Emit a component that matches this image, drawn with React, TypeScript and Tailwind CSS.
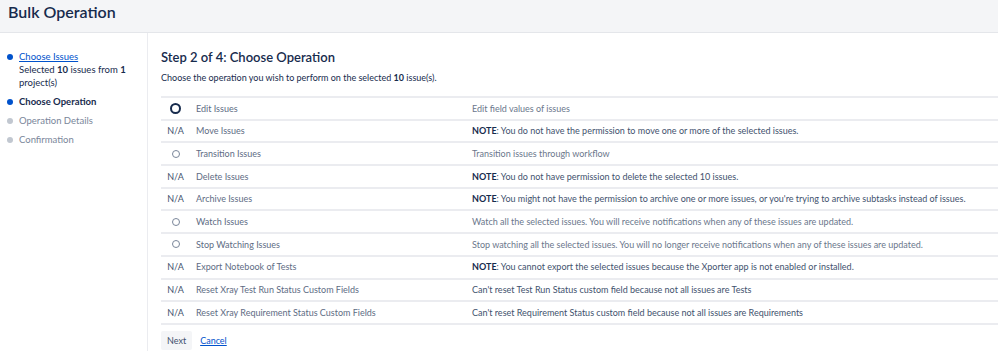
import React from 'react';

type Op = {
  name: string;
  available: boolean;
  desc: React.ReactNode;
  note?: boolean;
};

const ops: Op[] = [
  { name: 'Edit Issues', available: true, desc: 'Edit field values of issues' },
  { name: 'Move Issues', available: false, note: true, desc: 'You do not have the permission to move one or more of the selected issues.' },
  { name: 'Transition Issues', available: true, desc: 'Transition issues through workflow' },
  { name: 'Delete Issues', available: false, note: true, desc: 'You do not have permission to delete the selected 10 issues.' },
  { name: 'Archive Issues', available: false, note: true, desc: "You might not have the permission to archive one or more issues, or you're trying to archive subtasks instead of issues." },
  { name: 'Watch Issues', available: true, desc: 'Watch all the selected issues. You will receive notifications when any of these issues are updated.' },
  { name: 'Stop Watching Issues', available: true, desc: 'Stop watching all the selected issues. You will no longer receive notifications when any of these issues are updated.' },
  { name: 'Export Notebook of Tests', available: false, note: true, desc: 'You cannot export the selected issues because the Xporter app is not enabled or installed.' },
  { name: 'Reset Xray Test Run Status Custom Fields', available: false, desc: "Can't reset Test Run Status custom field because not all issues are Tests" },
  { name: 'Reset Xray Requirement Status Custom Fields', available: false, desc: "Can't reset Requirement Status custom field because not all issues are Requirements" },
];

export default function App() {
  return (
    <div className="w-[998px] h-[351px] overflow-hidden bg-white text-[#172b4d] font-['Lato','Open_Sans',sans-serif]">
      {/* header */}
      <header className="h-[33px] bg-[#f4f5f7] border-b border-[#e4e6ea] flex items-center px-[8px]">
        <h1 className="text-[16px] font-semibold leading-none -mt-[9px]">Bulk Operation</h1>
      </header>

      <div className="flex h-[318px]">
        {/* steps sidebar */}
        <aside className="w-[148px] shrink-0 border-r border-[#ebecf0] pt-[17px] pl-[7px] pr-[8px] text-[9.5px]">
          <ul className="flex flex-col gap-[6px]">
            <li className="flex gap-[6px]">
              <span className="mt-[4px] w-[6px] h-[6px] rounded-full bg-[#0052cc] shrink-0" />
              <div className="leading-[13px]">
                <a href="#" className="text-[#0052cc] underline">Choose Issues</a>
                <div className="w-[108px]">
                  Selected <b>10</b> issues from <b>1</b> project(s)
                </div>
              </div>
            </li>
            <li className="flex gap-[6px] leading-[13px]">
              <span className="mt-[4px] w-[6px] h-[6px] rounded-full bg-[#0052cc] shrink-0" />
              <span className="font-bold">Choose Operation</span>
            </li>
            <li className="flex gap-[6px] leading-[13px] text-[#7a869a]">
              <span className="mt-[4px] w-[6px] h-[6px] rounded-full bg-[#c1c7d0] shrink-0" />
              <span>Operation Details</span>
            </li>
            <li className="flex gap-[6px] leading-[13px] text-[#7a869a]">
              <span className="mt-[4px] w-[6px] h-[6px] rounded-full bg-[#c1c7d0] shrink-0" />
              <span>Confirmation</span>
            </li>
          </ul>
        </aside>

        {/* main */}
        <main className="flex-1 pl-[13px] pt-[15px]">
          <h2 className="text-[13px] font-semibold leading-[18px]">Step 2 of 4: Choose Operation</h2>
          <p className="mt-[6px] text-[9px] leading-[12px]">
            Choose the operation you wish to perform on the selected <b>10</b> issue(s).
          </p>

          <div className="mt-[12px] border-t-2 border-[#ebecf0] text-[9px]">
            {ops.map((op) => (
              <div key={op.name} className="flex items-center h-[22.7px] border-b-2 border-[#ebecf0]">
                <div className="w-[29px] shrink-0 flex justify-center">
                  {op.available ? (
                    op.name === 'Edit Issues' ? (
                      <span className="w-[11px] h-[11px] rounded-full border-2 border-[#172b4d] bg-white" />
                    ) : (
                      <span className="w-[8px] h-[8px] rounded-full border border-[#7a869a] bg-white" />
                    )
                  ) : (
                    <span className="text-[#42526e]">N/A</span>
                  )}
                </div>
                <div className="w-[282px] shrink-0 pl-[6px] text-[#5e6c84]">{op.name}</div>
                <div className={op.available ? 'text-[#6b778c]' : 'text-[#42526e]'}>
                  {op.note && <b className="text-[#172b4d]">NOTE</b>}
                  {op.note && ': '}
                  {op.desc}
                </div>
              </div>
            ))}
          </div>

          <div className="mt-[6px] flex items-center gap-[8px] text-[9px]">
            <button className="h-[19px] px-[6px] bg-[#f4f5f7] rounded-[2px] text-[#42526e]">Next</button>
            <a href="#" className="text-[#0052cc] underline">Cancel</a>
          </div>
        </main>
      </div>
    </div>
  );
}
